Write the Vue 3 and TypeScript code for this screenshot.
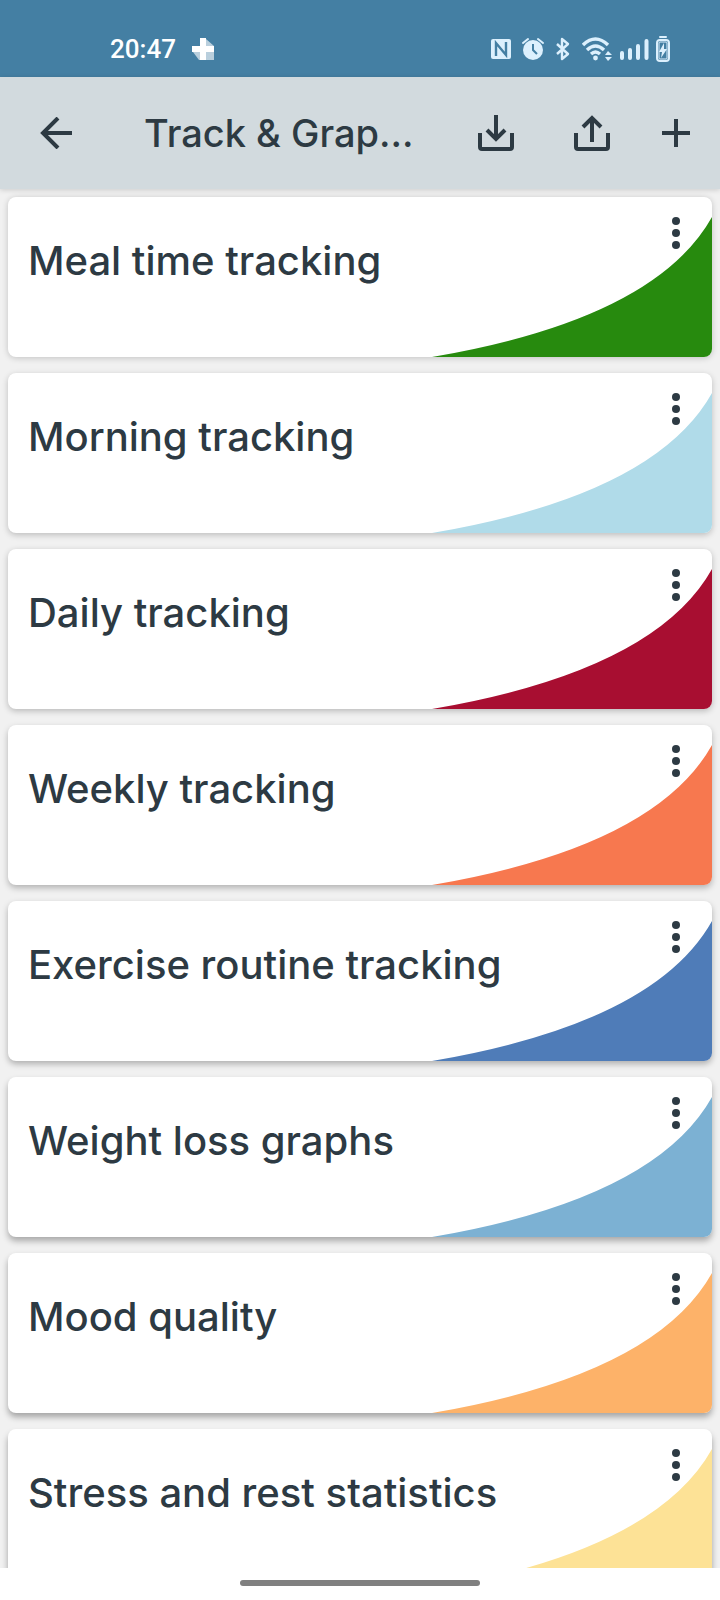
<script setup lang="ts">
interface TrackGroup {
  name: string
  color: string
}

const groups: TrackGroup[] = [
  { name: 'Meal time tracking', color: '#278a0e' },
  { name: 'Morning tracking', color: '#b0dbe9' },
  { name: 'Daily tracking', color: '#a80e31' },
  { name: 'Weekly tracking', color: '#f7784f' },
  { name: 'Exercise routine tracking', color: '#4f7cb8' },
  { name: 'Weight loss graphs', color: '#7cb1d3' },
  { name: 'Mood quality', color: '#fdb269' },
  { name: 'Stress and rest statistics', color: '#fde296' },
]

const shadowFor = (index: number) => ({
  boxShadow: `0 ${1 + Math.round(index / 2)}px 6px rgba(0, 0, 0, ${(0.2 + index * 0.02).toFixed(2)})`,
})
</script>

<template>
  <div class="screen">
    <div class="status">
      <div class="status-left">
        <span class="clock">20:47</span>
        <svg width="22" height="22" viewBox="0 0 22 22" aria-hidden="true">
          <path d="M14 1l8 7v14H7l-6-8 7-6z" fill="#b9cfdd" />
          <path d="M8 0h6v8h8v6h-8v8H8v-8H0V8h8z" fill="#fff" />
        </svg>
      </div>
      <div class="status-right" aria-hidden="true">
        <svg width="20" height="20" viewBox="0 0 20 20">
          <rect width="20" height="20" rx="2" fill="#dcf0fd" />
          <path d="M5 17V4l10 12V3" fill="none" stroke="#447fa3" stroke-width="2.4" />
        </svg>
        <svg class="alarm" width="22" height="24" viewBox="0 0 22 24">
          <circle cx="11" cy="13" r="10" fill="#dcf0fd" />
          <path d="M1 6l5-4M21 6l-5-4" stroke="#dcf0fd" stroke-width="2" stroke-linecap="round" />
          <path d="M11 7v6l4 4" fill="none" stroke="#447fa3" stroke-width="2" />
        </svg>
        <svg class="bluetooth" width="14" height="24" viewBox="0 0 14 24">
          <path d="M1 7l11 10-6 5V2l6 5L1 17" fill="none" stroke="#dcf0fd" stroke-width="2.4" stroke-linejoin="round" />
        </svg>
        <svg class="wifi" width="31" height="24" viewBox="0 0 31 24">
          <path d="M1 8q12.500-12 25 0M5 13q8.500-8 17 0M9 17q4.500-4 9 0" fill="none" stroke="#dcf0fd" stroke-width="3.4" />
          <circle cx="13.500" cy="21" r="2.4" fill="#dcf0fd" />
          <path d="M23 18l3-4 4 4zM23 20h7l-4 4z" fill="#dcf0fd" />
        </svg>
        <svg class="signal" width="29" height="22" viewBox="0 0 29 22">
          <path d="M2 20v-5M10 20v-8M18 20V8M26.500 20V3" stroke="#dcf0fd" stroke-width="4" stroke-linecap="round" />
        </svg>
        <svg class="battery" width="14" height="26" viewBox="0 0 14 26">
          <rect x="3" width="8" height="2" rx="1" fill="#dcf0fd" />
          <rect x="1" y="4" width="12" height="21" rx="3" fill="none" stroke="#dcf0fd" stroke-width="2" />
          <rect x="3" y="6" width="8" height="17" rx="1" fill="none" stroke="#dcf0fd" />
          <path d="M8 7l-5 9h3l-1 6 6-9H8z" fill="#dcf0fd" />
        </svg>
      </div>
    </div>

    <header class="bar">
      <button class="icon-button" aria-label="Back">
        <svg width="32" height="32" viewBox="0 0 32 32">
          <path d="M32 16H3M18 1L3 16l15 15" />
        </svg>
      </button>
      <h1>Track &amp; Grap...</h1>
      <button class="icon-button" aria-label="Import">
        <svg width="36" height="36" viewBox="0 0 36 36">
          <path d="M2 18v14q0 2 2 2h28q2 0 2-2V18M18 0v24M9 15l9 9 9-9" />
        </svg>
      </button>
      <button class="icon-button" aria-label="Export">
        <svg width="36" height="36" viewBox="0 0 36 36">
          <path d="M2 18v14q0 2 2 2h28q2 0 2-2V18M18 27V3M9 12l9-9 9 9" />
        </svg>
      </button>
      <button class="icon-button add" aria-label="Add">
        <svg width="28" height="28" viewBox="0 0 28 28">
          <path d="M14 0v28M0 14h28" />
        </svg>
      </button>
    </header>

    <main class="list">
      <article v-for="(group, index) in groups" :key="group.name" class="card" :style="shadowFor(index)">
        <svg class="swoosh" width="280" height="140" viewBox="0 0 280 140" aria-hidden="true">
          <path d="M0 140Q223 102 280 0v140z" :fill="group.color" />
        </svg>
        <h2>{{ group.name }}</h2>
        <button class="more" :aria-label="`Options for ${group.name}`">
          <svg width="8" height="32" viewBox="0 0 8 32">
            <circle cx="4" cy="4" r="4" />
            <circle cx="4" cy="16" r="4" />
            <circle cx="4" cy="28" r="4" />
          </svg>
        </button>
      </article>
    </main>

    <div class="gesture"><span class="handle"></span></div>
  </div>
</template>

<style>
body {
  margin: 0;
}
</style>

<style scoped>
.screen {
  display: flex;
  flex-direction: column;
  height: 100vh;
  overflow: hidden;
  background: #f1f1f1;
  color: #2d3a43;
  font-family: Inter, 'Liberation Sans', sans-serif;
}

.status {
  display: flex;
  flex: none;
  align-items: center;
  justify-content: space-between;
  box-sizing: border-box;
  height: 77px;
  padding: 20px 50px 0 110px;
  background: #447fa3;
}

.status-left,
.status-right {
  display: flex;
  align-items: center;
}

.clock {
  margin-right: 16px;
  color: #fff;
  font: 500 26px/32px Roboto, sans-serif;
}

.alarm {
  margin-left: 11px;
}

.bluetooth {
  margin-left: 12px;
}

.wifi {
  margin-left: 12px;
}

.signal {
  margin-left: 7px;
}

.battery {
  margin-left: 7px;
}

.bar {
  position: relative;
  display: flex;
  flex: none;
  align-items: center;
  height: 112px;
  padding: 0 20px 0 24px;
  background: #d2dade;
  box-shadow: 0 1px 5px rgba(0, 0, 0, 0.16);
}

button {
  padding: 0;
  border: 0;
  background: none;
}

.icon-button {
  display: flex;
  flex: none;
  align-items: center;
  justify-content: center;
  width: 64px;
  height: 64px;
}

.icon-button + .icon-button {
  margin-left: 32px;
}

.icon-button + .add {
  width: 48px;
  margin-left: 28px;
}

.icon-button path {
  fill: none;
  stroke: #2d3a43;
  stroke-width: 4;
}

h1,
h2 {
  margin: 0;
  font-weight: 500;
  line-height: 48px;
}

h1 {
  flex: 1;
  min-width: 0;
  margin-left: 56px;
  overflow: hidden;
  font-size: 38px;
  white-space: nowrap;
}

h2 {
  font-size: 40px;
}

.list {
  display: flex;
  flex: 1;
  flex-direction: column;
  gap: 16px;
  min-height: 0;
  padding: 8px 8px 0;
  overflow: hidden;
}

.card {
  position: relative;
  display: flex;
  flex: none;
  align-items: flex-start;
  justify-content: space-between;
  box-sizing: border-box;
  height: 160px;
  padding: 20px 20px 0;
  overflow: hidden;
  border-radius: 8px;
  background: #fff;
}

.swoosh {
  position: absolute;
  right: 0;
  bottom: 0;
}

.card h2 {
  position: relative;
  padding-top: 20px;
}

.more {
  position: relative;
  display: flex;
  justify-content: center;
  width: 32px;
  height: 48px;
  fill: #2d3a43;
}

.gesture {
  display: flex;
  flex: none;
  align-items: center;
  justify-content: center;
  box-sizing: border-box;
  height: 32px;
  padding-bottom: 2px;
  background: #fff;
}

.handle {
  width: 240px;
  height: 6px;
  border-radius: 3px;
  background: #808080;
}
</style>
